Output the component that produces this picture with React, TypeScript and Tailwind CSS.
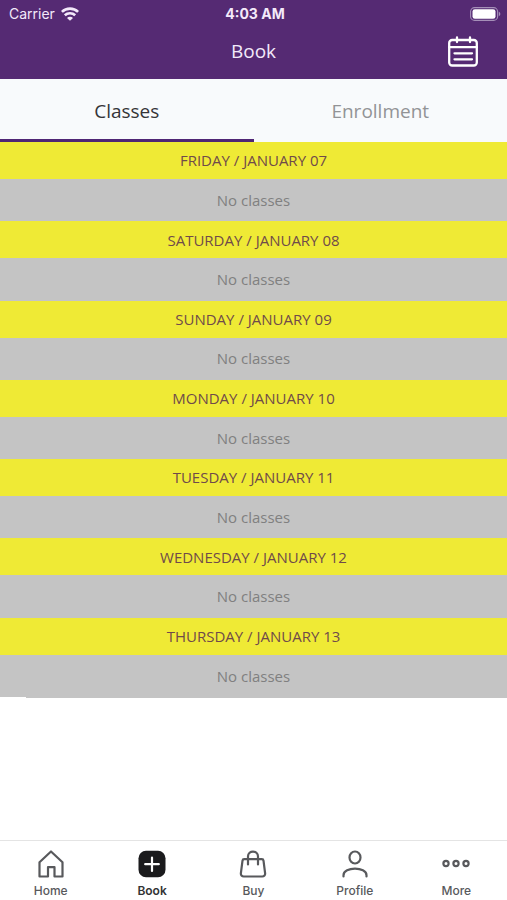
import type { ReactNode } from 'react'

const days = [
  'Friday / January 07',
  'Saturday / January 08',
  'Sunday / January 09',
  'Monday / January 10',
  'Tuesday / January 11',
  'Wednesday / January 12',
  'Thursday / January 13',
]

const stroke = {
  fill: 'none',
  stroke: 'currentColor',
  strokeWidth: 2,
  strokeLinejoin: 'round',
  strokeLinecap: 'round',
} as const

function WifiIcon() {
  return (
    <svg viewBox="0 0 18 14" className="w-[18px] h-[14px]" fill="none" stroke="currentColor" strokeWidth="2.6" aria-hidden="true">
      <path d="M.9 4.900C5.300 .5 12.700 .5 17.100 4.900" />
      <path d="M3.800 8.300c2.900-2.800 7.500-2.800 10.400 0" />
      <path d="M9 13.800 6 10.900c1.600-1.500 4.400-1.500 6 0z" fill="currentColor" stroke="none" />
    </svg>
  )
}

function BatteryIcon() {
  return (
    <svg viewBox="0 0 31 14" className="w-[31px] h-[14px]" aria-hidden="true">
      <rect x=".6" y=".6" width="27" height="12.8" rx="4" fill="none" stroke="#a58fb8" strokeWidth="1.1" />
      <rect x="2.500" y="2.200" width="23" height="9.600" rx="2.400" fill="#fff" />
      <path d="M28.800 4.800c2 .7 2 3.700 0 4.400z" fill="#a58fb8" />
    </svg>
  )
}

function CalendarIcon() {
  return (
    <svg viewBox="0 0 32 32" className="size-8" {...stroke} strokeWidth={2.300} aria-hidden="true">
      <rect x="2.200" y="4" width="27.600" height="25.500" rx="3" />
      <path d="M2.200 11.200h27.600M10 1.500v4.500M23 1.500v4.500" />
      <path d="M7.500 17.300h17.500M7.500 23.300h17.500" />
    </svg>
  )
}

function HomeIcon() {
  return (
    <svg viewBox="0 0 28 28" className="size-7" {...stroke} strokeWidth={2.200} aria-hidden="true">
      <path d="M2.500 12.200 14 1.500l11.500 10.700V26.500h-8V17.200h-6.500v9.300h-8.500z" />
    </svg>
  )
}

function BookIcon() {
  return (
    <svg viewBox="0 0 28 28" className="size-7" aria-hidden="true">
      <rect x=".5" y=".7" width="27" height="26.600" rx="7.500" fill="#1b1b1d" />
      <path d="M14 7.500v13.500M7.200 14.200h13.600" stroke="#fff" strokeWidth="2.200" strokeLinecap="round" />
    </svg>
  )
}

function BagIcon() {
  return (
    <svg viewBox="0 0 28 28" className="size-7" {...stroke} strokeWidth={2.200} aria-hidden="true">
      <path d="M5.200 9.200h17.600c1 0 1.600.5 1.700 1.400l1.600 12.600c.3 2-.9 3.300-2.900 3.300H4.800c-2 0-3.200-1.300-2.900-3.300l1.600-12.600C3.600 9.700 4.200 9.200 5.200 9.200z" />
      <path d="M9 14.500V6.500c0-6.500 10-6.500 10 0v8" />
    </svg>
  )
}

function ProfileIcon() {
  return (
    <svg viewBox="0 0 28 28" className="size-7" {...stroke} strokeWidth={2.200} aria-hidden="true">
      <ellipse cx="14" cy="7.500" rx="5.500" ry="6" />
      <path d="M2.500 26.500v-1.300c0-8.700 23-8.700 23 0v1.300" />
    </svg>
  )
}

function MoreIcon() {
  return (
    <svg viewBox="0 0 28 28" className="size-7" {...stroke} strokeWidth={2.200} aria-hidden="true">
      <circle cx="4" cy="13.500" r="2.600" />
      <circle cx="14" cy="13.500" r="2.600" />
      <circle cx="24" cy="13.500" r="2.600" />
    </svg>
  )
}

const navItems: { label: string; icon: ReactNode; active?: boolean }[] = [
  { label: 'Home', icon: <HomeIcon /> },
  { label: 'Book', icon: <BookIcon />, active: true },
  { label: 'Buy', icon: <BagIcon /> },
  { label: 'Profile', icon: <ProfileIcon /> },
  { label: 'More', icon: <MoreIcon /> },
]

export default function App() {
  return (
    <div className="min-h-screen flex flex-col bg-white font-['Open_Sans',sans-serif]">

      {/* Status bar and title */}
      <header className="bg-[#552a73] text-[#f3e9fa]">
        <div className="grid grid-cols-3 items-center h-7 pl-[9px] pr-[6px] font-['Inter',sans-serif] text-sm">
          <div className="flex items-center gap-[6px]">
            <span>Carrier</span>
            <WifiIcon />
          </div>
          <span className="text-center font-bold">4:03 AM</span>
          <div className="flex justify-end">
            <BatteryIcon />
          </div>
        </div>
        <div className="grid grid-cols-3 items-center h-[51px] pb-1 px-7">
          <h1 className="col-start-2 text-center text-[19px]">Book</h1>
          <button type="button" aria-label="Calendar" className="justify-self-end text-white">
            <CalendarIcon />
          </button>
        </div>
      </header>

      {/* Tabs */}
      <div role="tablist" className="grid grid-cols-2 h-[63px] bg-[#f8fafc] text-[19px]">
        <button type="button" role="tab" aria-selected="true" className="border-b-3 border-[#4f2575] pt-1 text-[#343438]">
          Classes
        </button>
        <button type="button" role="tab" aria-selected="false" className="border-b-3 border-transparent pt-1 text-[#929396]">
          Enrollment
        </button>
      </div>

      {/* Schedule */}
      <main className="flex-1">
        <div className="grid auto-rows-fr min-h-[555px] text-center text-[15px]">
          {days.map((day) => (
            <section key={day} className="flex flex-col bg-[#c4c4c4]">
              <h2 className="flex items-center justify-center h-[37px] bg-[#efea35] uppercase text-[#704a4a]">{day}</h2>
              <p className="flex flex-1 items-center justify-center text-[#808080]">No classes</p>
            </section>
          ))}
        </div>
        {/* Inset divider */}
        <div className="h-px ml-[26px] bg-[#c4c4c4]" />
      </main>

      {/* Bottom navigation */}
      <nav className="grid grid-cols-5 h-[60px] border-t border-[#e4e4e4] font-['Inter',sans-serif] text-xs">
        {navItems.map((item) => (
          <a
            key={item.label}
            href="#"
            aria-current={item.active ? 'page' : undefined}
            className={`flex flex-col items-center gap-[5px] pt-[9px] ${item.active ? 'font-semibold text-[#333335]' : 'font-medium text-[#58595c]'}`}
          >
            {item.icon}
            <span>{item.label}</span>
          </a>
        ))}
      </nav>
    </div>
  )
}
